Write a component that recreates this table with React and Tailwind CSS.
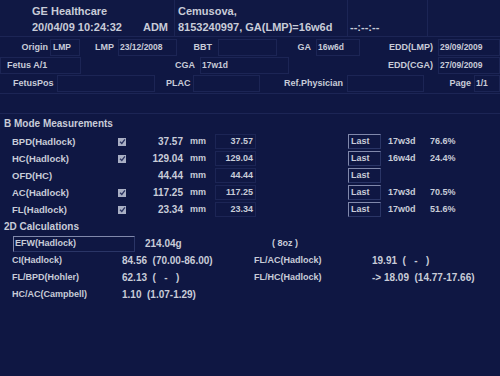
import React from "react";

const line = "border-[#1c2555]";

function Box({ className = "", children }) {
  return (
    <div className={`h-[17px] border ${line} flex items-center text-[8.5px] ${className}`}>
      {children}
    </div>
  );
}

function Check() {
  return (
    <div className="w-[8px] h-[8px] bg-[#a9afc4] flex items-center justify-center">
      <svg width="7" height="7" viewBox="0 0 8 8">
        <path d="M1.2 4.2 L3.2 6.2 L6.8 1.6" stroke="#2a3360" strokeWidth="1.5" fill="none" />
      </svg>
    </div>
  );
}

const measurements = [
  { name: "BPD(Hadlock)", check: true, value: "37.57", ga: "17w3d", pct: "76.6%" },
  { name: "HC(Hadlock)", check: true, value: "129.04", ga: "16w4d", pct: "24.4%" },
  { name: "OFD(HC)", check: false, value: "44.44", ga: "", pct: "" },
  { name: "AC(Hadlock)", check: true, value: "117.25", ga: "17w3d", pct: "70.5%" },
  { name: "FL(Hadlock)", check: true, value: "23.34", ga: "17w0d", pct: "51.6%" },
];

const lastBox =
  "border-l border-t border-[#8088ab] border-r border-b border-r-[#2a3566] border-b-[#2a3566]";

export default function App() {
  return (
    <div className="w-[500px] h-[376px] overflow-hidden bg-[#0f1743] text-[#c8ccd8] font-bold text-[9px] font-['Liberation_Sans',Arial,sans-serif] leading-none">
      {/* Header band */}
      <div className={`flex h-[37px] border-b ${line} bg-[#101844]`}>
        <div className={`w-[175px] border-r ${line} pl-[32px] pt-[3px] text-[11px]`}>
          <div className="h-[16px] flex items-center">GE Healthcare</div>
          <div className="h-[16px] flex items-center justify-between pr-[6px]">
            <span>20/04/09 10:24:32</span>
            <span>ADM</span>
          </div>
        </div>
        <div className={`w-[173px] border-r ${line} pl-[3px] pt-[3px] text-[11px]`}>
          <div className="h-[16px] flex items-center">Cemusova,</div>
          <div className="h-[16px] flex items-center whitespace-nowrap">8153240997, GA(LMP)=16w6d</div>
        </div>
        <div className={`w-[80px] border-r ${line} pt-[3px] text-[11px]`}>
          <div className="h-[16px]"></div>
          <div className="h-[16px] flex items-center pl-[2px]">--:--:--</div>
        </div>
        <div className="flex-1"></div>
      </div>

      {/* Row 1 */}
      <div className="flex items-center h-[18px] mt-[1px]">
        <div className="w-[50px] text-right pr-[2px]">Origin</div>
        <Box className="w-[30px] pl-[2px]">LMP</Box>
        <div className="w-[38px] text-right pr-[4px]">LMP</div>
        <Box className="w-[59px] pl-[1px]">23/12/2008</Box>
        <div className="w-[41px] text-right pr-[6px]">BBT</div>
        <Box className="w-[59px]"></Box>
        <div className="w-[39px] text-right pr-[5px]">GA</div>
        <Box className="w-[44px] pl-[1px]">16w6d</Box>
        <div className="w-[78px] text-right pr-[5px]">EDD(LMP)</div>
        <Box className="flex-1 pl-[1px]">29/09/2009</Box>
      </div>

      {/* Row 2 */}
      <div className="flex items-center h-[18px]">
        <Box className="w-[81px] pl-[6px] text-[9px]">Fetus A/1</Box>
        <div className="w-[119px] text-right pr-[5px]">CGA</div>
        <Box className="w-[89px] pl-[1px]">17w1d</Box>
        <div className="w-[149px] text-right pr-[5px]">EDD(CGA)</div>
        <Box className="flex-1 pl-[1px]">27/09/2009</Box>
      </div>

      {/* Row 3 */}
      <div className="flex items-center h-[18px]">
        <div className="w-[57px] pl-[13px]">FetusPos</div>
        <Box className="w-[98px]"></Box>
        <div className="w-[38px] pl-[11px]">PLAC</div>
        <Box className="w-[67px]"></Box>
        <div className="w-[87px] text-right pr-[4px]">Ref.Physician</div>
        <Box className="w-[77px]"></Box>
        <div className="w-[50px] text-right pr-[3px]">Page</div>
        <Box className="flex-1 pl-[1px]">1/1</Box>
      </div>

      <div className={`h-[2px] border-b ${line}`}></div>
      <div className={`h-[20px] border-b ${line}`}></div>

      {/* B Mode Measurements */}
      <div className="h-[17px] flex items-center pl-[4px] text-[10px] mt-[1px]">B Mode Measurements</div>
      <div className="mt-[1px]">
        {measurements.map((m) => (
          <div key={m.name} className="flex items-center h-[17px]">
            <div className="w-[118px] pl-[12px] text-[9.5px]">{m.name}</div>
            <div className="w-[8px]">{m.check && <Check />}</div>
            <div className="w-[57px] text-right text-[10px]">{m.value}</div>
            <div className="w-[32px] pl-[7px]">mm</div>
            <div className={`w-[41px] h-[15px] border ${line} flex items-center justify-end pr-[2px]`}>{m.value}</div>
            <div className="w-[92px]"></div>
            <div className={`w-[33px] h-[15px] ${lastBox} flex items-center pl-[2px]`}>Last</div>
            <div className="w-[49px] pl-[7px]">{m.ga}</div>
            <div>{m.pct}</div>
          </div>
        ))}
      </div>

      {/* 2D Calculations */}
      <div className="h-[16px] flex items-center pl-[4px] text-[10px] mt-[1px]">2D Calculations</div>
      <div className="flex items-center h-[17px]">
        <div className={`ml-[13px] w-[122px] h-[16px] ${lastBox} flex items-center pl-[1px]`}>
          EFW(Hadlock)
        </div>
        <div className="w-[137px] pl-[10px] text-[10px]">214.04g</div>
        <div className="whitespace-pre">( 8oz )</div>
      </div>
      {[
        ["CI(Hadlock)", "84.56  (70.00-86.00)", "FL/AC(Hadlock)", "19.91  (   -   )"],
        ["FL/BPD(Hohler)", "62.13  (   -   )", "FL/HC(Hadlock)", "-> 18.09  (14.77-17.66)"],
        ["HC/AC(Campbell)", "1.10  (1.07-1.29)", "", ""],
      ].map(([a, b, c, d]) => (
        <div key={a} className="flex items-center h-[17px]">
          <div className="w-[122px] pl-[12px]">{a}</div>
          <div className="w-[132px] whitespace-pre text-[10px]">{b}</div>
          <div className="w-[118px]">{c}</div>
          <div className="whitespace-pre text-[10px]">{d}</div>
        </div>
      ))}
    </div>
  );
}
